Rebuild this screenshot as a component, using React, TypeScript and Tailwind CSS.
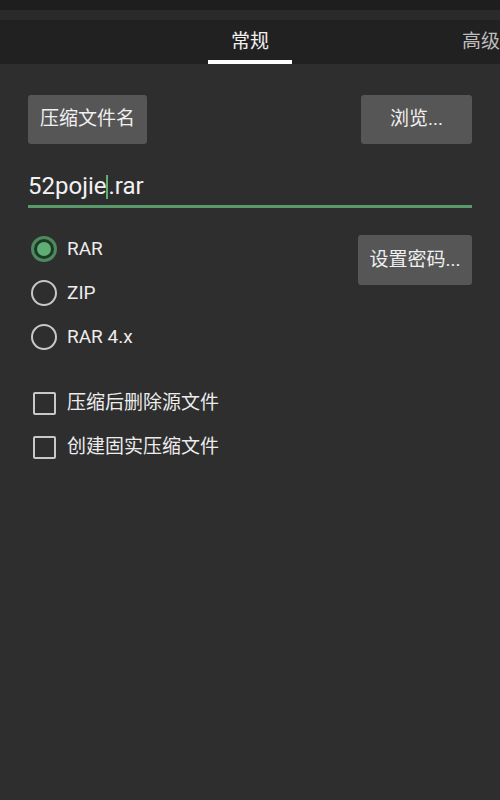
import React from "react";

const font = { fontFamily: '"Roboto", "Noto Sans CJK SC", sans-serif' };

function Radio({ checked, label }: { checked?: boolean; label: string }) {
  return (
    <div className="flex items-center h-[44px]">
      <div className="w-[32px] flex justify-center">
        {checked ? (
          <div className="w-[26px] h-[26px] rounded-full bg-[#4f8a5e] flex items-center justify-center">
            <div className="w-[20px] h-[20px] rounded-full bg-[#1d3a26] flex items-center justify-center">
              <div className="w-[14px] h-[14px] rounded-full bg-[#5fae74]" />
            </div>
          </div>
        ) : (
          <div className="w-[26px] h-[26px] rounded-full border-[2px] border-[#c8c8c8]" />
        )}
      </div>
      <span className="ml-[7px] text-[19px] text-[#ececec]">{label}</span>
    </div>
  );
}

function Check({ label }: { label: string }) {
  return (
    <div className="flex items-center h-[44px]">
      <div className="w-[32px] flex justify-center">
        <div className="w-[23px] h-[23px] rounded-[2px] border-[2px] border-[#c8c8c8]" />
      </div>
      <span className="ml-[7px] text-[19px] text-[#ececec]">{label}</span>
    </div>
  );
}

export default function App() {
  return (
    <div className="w-[500px] h-[800px] bg-[#2e2e2e] overflow-hidden" style={font}>
      <div className="h-[10px] bg-[#1e1e1e]" />
      <div className="h-[10px] bg-[#2a2a2a]" />
      <div className="h-[44px] bg-[#212121] relative flex">
        <div className="absolute left-[208px] w-[84px] top-0 bottom-0 flex flex-col items-center">
          <span className="text-[19px] text-[#f0f0f0] mt-[10px] leading-[24px]">常规</span>
          <div className="mt-auto h-[4px] w-full bg-white" />
        </div>
        <span className="absolute left-[462px] top-[10px] text-[19px] leading-[24px] text-[#bdbdbd] whitespace-nowrap">高级</span>
      </div>
      <div className="px-[28px] pt-[31px]">
        <div className="flex justify-between">
          <div className="w-[119px] h-[49px] bg-[#565656] rounded-[3px] flex items-center justify-center text-[19px] text-[#f0f0f0]">压缩文件名</div>
          <div className="w-[111px] h-[49px] bg-[#565656] rounded-[3px] flex items-center justify-center text-[19px] text-[#f0f0f0]">浏览...</div>
        </div>
        <div className="mt-[26px] h-[35px] flex items-end pb-[5px] text-[24px] text-[#f2f2f2] leading-[28px]">
          <span>52pojie</span>
          <span className="inline-block w-[2px] h-[24px] bg-[#5fae74] mb-[1px]" />
          <span>.rar</span>
        </div>
        <div className="h-[3px] bg-[#5a9a6a]" />
        <div className="flex justify-between mt-[19px]">
          <div className="flex flex-col">
            <Radio checked label="RAR" />
            <Radio label="ZIP" />
            <Radio label="RAR 4.x" />
          </div>
          <div className="mt-[8px] w-[114px] h-[50px] bg-[#565656] rounded-[3px] flex items-center justify-center text-[19px] text-[#f0f0f0]">设置密码...</div>
        </div>
        <div className="flex flex-col mt-[22px]">
          <Check label="压缩后删除源文件" />
          <Check label="创建固实压缩文件" />
        </div>
      </div>
    </div>
  );
}
